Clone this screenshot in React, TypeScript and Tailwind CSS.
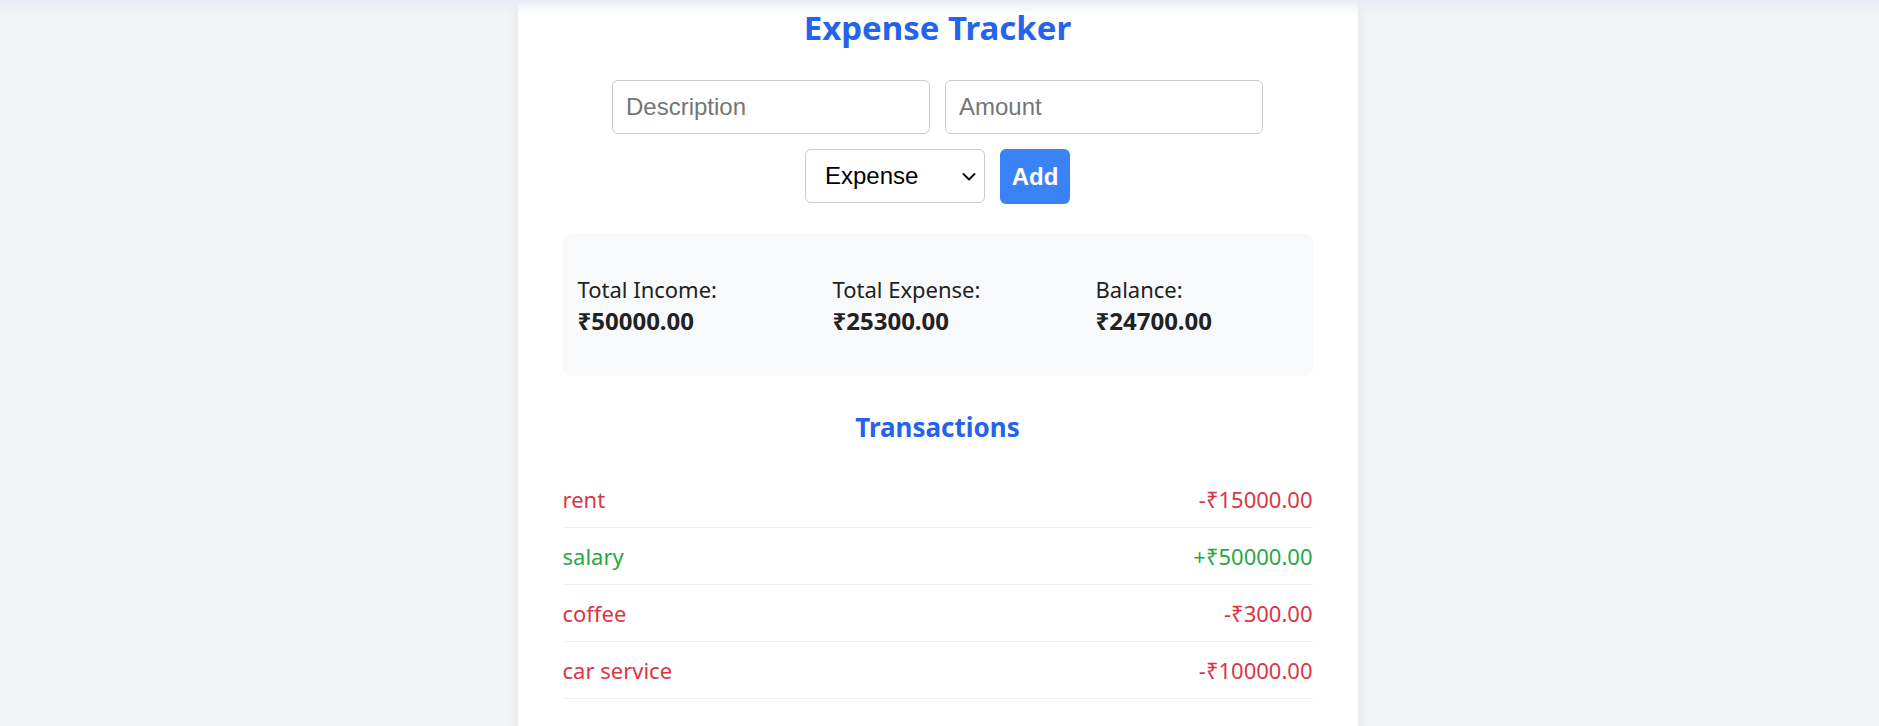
import { useState } from "react";

type Transaction = {
  id: number;
  description: string;
  amount: number;
  type: "income" | "expense";
};

const initialTransactions: Transaction[] = [
  { id: 1, description: "rent", amount: 15000, type: "expense" },
  { id: 2, description: "salary", amount: 50000, type: "income" },
  { id: 3, description: "coffee", amount: 300, type: "expense" },
  { id: 4, description: "car service", amount: 10000, type: "expense" },
];

export default function App() {
  const [transactions] = useState<Transaction[]>(initialTransactions);
  const [description, setDescription] = useState("");
  const [amount, setAmount] = useState("");
  const [type, setType] = useState("expense");

  const totalIncome = transactions
    .filter((t) => t.type === "income")
    .reduce((sum, t) => sum + t.amount, 0);
  const totalExpense = transactions
    .filter((t) => t.type === "expense")
    .reduce((sum, t) => sum + t.amount, 0);
  const balance = totalIncome - totalExpense;

  return (
    <div className="relative min-h-screen bg-[#f3f4f6] pr-[4px] font-['Noto_Sans',sans-serif]">
      {/* faint shadow along the top edge of the viewport */}
      <div className="pointer-events-none absolute inset-x-0 top-0 z-10 h-[14px] bg-linear-to-b from-[#e9ecf4] to-transparent" />

      <div className="mx-auto min-h-screen w-[840px] bg-white px-[45px] pt-[6px] pb-[40px] shadow-[0_0_12px_rgba(0,0,0,0.07)]">
        <h1 className="text-center text-[33px] leading-[44px] font-bold text-[#2563eb]">
          Expense Tracker
        </h1>

        <form
          className="mt-[30px] flex flex-wrap justify-center gap-[15px] font-['Liberation_Sans',Arial,sans-serif]"
          onSubmit={(e) => e.preventDefault()}
        >
          <input
            type="text"
            placeholder="Description"
            value={description}
            onChange={(e) => setDescription(e.target.value)}
            className="h-[54px] w-[318px] rounded-[6px] border border-[#ccc] px-[13px] text-[24px] text-black outline-none placeholder:text-[#757575]"
          />
          <input
            type="number"
            placeholder="Amount"
            value={amount}
            onChange={(e) => setAmount(e.target.value)}
            className="h-[54px] w-[318px] rounded-[6px] border border-[#ccc] px-[13px] text-[24px] text-black outline-none placeholder:text-[#757575]"
          />
          <div className="relative">
            <select
              value={type}
              onChange={(e) => setType(e.target.value)}
              className="h-[54px] w-[180px] appearance-none rounded-[6px] border border-[#ccc] bg-white pr-[36px] pl-[19px] text-[24px] text-black outline-none"
            >
              <option value="expense">Expense</option>
              <option value="income">Income</option>
            </select>
            <svg
              className="pointer-events-none absolute top-1/2 right-[9px] -translate-y-1/2"
              width="14"
              height="9"
              viewBox="0 0 14 9"
              fill="none"
            >
              <path d="M1.5 1.5 7 7l5.5-5.5" stroke="#111" strokeWidth="2" strokeLinecap="round" strokeLinejoin="round" />
            </svg>
          </div>
          <button
            type="submit"
            className="h-[55px] w-[70px] rounded-[6px] bg-[#3b82f6] text-[24px] font-bold text-white"
          >
            Add
          </button>
        </form>

        <div className="mt-[30px] grid h-[142px] grid-cols-[255px_263px_1fr] items-center rounded-[8px] bg-[#f8f9fa] pl-[15px] text-[22px] leading-[32px] text-[#222]">
          <div>
            <div>Total Income:</div>
            <div className="text-[24px] font-bold">₹{totalIncome.toFixed(2)}</div>
          </div>
          <div>
            <div>Total Expense:</div>
            <div className="text-[24px] font-bold">₹{totalExpense.toFixed(2)}</div>
          </div>
          <div>
            <div>Balance:</div>
            <div className="text-[24px] font-bold">₹{balance.toFixed(2)}</div>
          </div>
        </div>

        <h2 className="mt-[34px] mb-[27px] text-center text-[26px] leading-[34px] font-bold text-[#2563eb]">
          Transactions
        </h2>

        <ul>
          {transactions.map((t) => (
            <li
              key={t.id}
              className={`flex items-center justify-between border-b border-[#eee] py-[12px] text-[22px] leading-[32px] ${
                t.type === "income" ? "text-[#28a745]" : "text-[#dc3545]"
              }`}
            >
              <span>{t.description}</span>
              <span>
                {t.type === "income" ? "+" : "-"}₹{t.amount.toFixed(2)}
              </span>
            </li>
          ))}
        </ul>
      </div>
    </div>
  );
}
